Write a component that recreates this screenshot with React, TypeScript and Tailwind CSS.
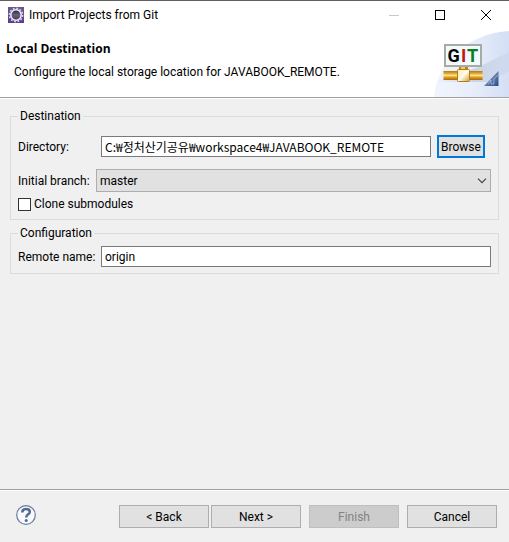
import type { ButtonHTMLAttributes, ReactNode } from "react";

function EclipseIcon() {
  return (
    <svg width="16" height="16" viewBox="0 0 16 16" aria-hidden="true" className="shrink-0">
      <defs>
        <linearGradient id="ecl" x1="0" y1="0" x2="0" y2="1">
          <stop offset="0" stopColor="#6a5a96" />
          <stop offset="1" stopColor="#5c3a8c" />
        </linearGradient>
        <linearGradient id="moon" x1="0" y1="0" x2="0" y2="1">
          <stop offset="0" stopColor="#27203c" />
          <stop offset="0.5" stopColor="#66627c" />
          <stop offset="1" stopColor="#3c3656" />
        </linearGradient>
      </defs>
      <rect width="16" height="16" fill="url(#ecl)" />
      <circle cx="8" cy="8" r="6.6" fill="none" stroke="#d5d0e0" strokeWidth="1.6" strokeDasharray="1.9 1.556" />
      <circle cx="8" cy="8" r="5.2" fill="url(#moon)" stroke="#efedf5" strokeWidth="1.5" />
    </svg>
  );
}

function GitBanner() {
  return (
    <svg width="75" height="68" viewBox="0 0 75 68" role="img" aria-label="GIT" className="shrink-0">
      <defs>
        <linearGradient id="sky" x1="0" y1="0" x2="1" y2="0">
          <stop offset="0" stopColor="#f1f5fd" />
          <stop offset="0.5" stopColor="#e8eefa" />
          <stop offset="1" stopColor="#d3dff6" />
        </linearGradient>
        <linearGradient id="pipe" x1="0" y1="0" x2="0" y2="1">
          <stop offset="0" stopColor="#b5790f" />
          <stop offset="0.25" stopColor="#dda52c" />
          <stop offset="0.5" stopColor="#ffe28b" />
          <stop offset="0.7" stopColor="#dc9c21" />
          <stop offset="1" stopColor="#a96904" />
        </linearGradient>
        <linearGradient id="joint" x1="0" y1="0" x2="1" y2="1">
          <stop offset="0" stopColor="#ffe9a6" />
          <stop offset="0.5" stopColor="#fffbe8" />
          <stop offset="1" stopColor="#d59a2a" />
        </linearGradient>
        <linearGradient id="shade" x1="0" y1="0" x2="1" y2="0">
          <stop offset="0" stopColor="#c3cad6" stopOpacity="0.1" />
          <stop offset="0.5" stopColor="#b9c2d2" stopOpacity="0.6" />
          <stop offset="1" stopColor="#c5d1e7" stopOpacity="0.4" />
        </linearGradient>
        <linearGradient id="corner" x1="0" y1="0" x2="1" y2="1">
          <stop offset="0" stopColor="#9bb2d5" />
          <stop offset="1" stopColor="#284c87" />
        </linearGradient>
      </defs>
      <path d="M0 68C2 34 34 4 75 2V68Z" fill="url(#sky)" />
      <path d="M45 38L75 23V42L56 53H4L10 49Z" fill="url(#shade)" />
      <path d="M64.5 42V57H50Z" fill="url(#corner)" />
      <path d="M54 55L57 51V55H60V50L64 46" fill="none" stroke="#d7e2f5" strokeWidth="0.9" opacity="0.6" />
      <rect x="11" y="16" width="36" height="21" fill="#f1fafc" stroke="#a8aaa4" strokeWidth="2" />
      <g fontFamily="Roboto, sans-serif" fontSize="18" fontWeight="700">
        <text x="13.5" y="33" fill="#080808">G</text>
        <text x="27" y="33" fill="#c7141b">I</text>
        <text x="33" y="33" fill="#087d1b">T</text>
      </g>
      <rect x="25" y="38" width="9" height="4" fill="#b88424" />
      <rect x="27" y="38" width="4" height="4" fill="#f1cb70" />
      <rect x="9.5" y="42" width="39" height="9" fill="url(#pipe)" />
      <rect x="23.5" y="40.5" width="12" height="12" rx="1" fill="url(#joint)" stroke="#b57a19" />
    </svg>
  );
}

function CaptionButton({ label, children }: { label: string; children: ReactNode }) {
  return (
    <button type="button" aria-label={label} className="flex h-7 w-[46px] items-center justify-center">
      <svg width="10" height="10" viewBox="0 0 10 10" fill="none" shapeRendering="crispEdges" aria-hidden="true">
        {children}
      </svg>
    </button>
  );
}

function WizardButton(props: ButtonHTMLAttributes<HTMLButtonElement>) {
  return (
    <button
      type="button"
      className="h-[23px] w-[90px] border border-[#adadad] bg-[#e1e1e1] leading-4 disabled:border-[#bfbfbf] disabled:bg-[#cccccc] disabled:text-[#838383]"
      {...props}
    />
  );
}

export default function App() {
  return (
    <div className="flex min-h-screen flex-col border-t border-[#606060] bg-[#f0f0f0] font-['Roboto','Noto_Sans_CJK_KR',sans-serif] text-[12px] leading-4 text-black">
      <header className="border-b border-[#a0a0a0] bg-white">
        <div className="flex h-7 items-center pl-2">
          <EclipseIcon />
          <span className="ml-[5px] flex-1">Import Projects from Git</span>
          <CaptionButton label="Minimize">
            <path d="M0 5.5H10" stroke="#c8c8c8" />
          </CaptionButton>
          <CaptionButton label="Maximize">
            <rect x="0.5" y="0.5" width="9" height="9" stroke="#000" />
          </CaptionButton>
          <CaptionButton label="Close">
            <path d="M0 0L10 10M10 0L0 10" stroke="#000" shapeRendering="auto" />
          </CaptionButton>
        </div>
        <div className="flex justify-between">
          <div className="pl-1.5 pt-3">
            <h1 className="font-['Open_Sans',sans-serif] font-bold">Local Destination</h1>
            <p className="mt-[7px] pl-2">Configure the local storage location for JAVABOOK_REMOTE.</p>
          </div>
          <GitBanner />
        </div>
      </header>

      <main className="flex-1 border-t border-white px-2.5 pt-[9px]">
        <fieldset className="border border-[#dcdcdc] px-[7px] pb-[7px]">
          <legend className="px-0.5">Destination</legend>
          <div className="mt-[11px] flex items-center">
            <label htmlFor="directory" className="w-[83px]">Directory:</label>
            <input
              id="directory"
              defaultValue="C:₩정처산기공유₩workspace4₩JAVABOOK_REMOTE"
              className="h-[21px] min-w-0 flex-1 border border-[#7a7a7a] bg-white px-[3px] font-['Noto_Sans_CJK_KR',sans-serif]"
            />
            <button type="button" className="ml-1.5 mr-[6px] h-[23px] w-12 border-2 border-[#0078d7] bg-[#e1e1e1] leading-4">
              Browse
            </button>
          </div>
          <div className="mt-[11px] flex items-center">
            <label htmlFor="branch" className="w-[78px] whitespace-nowrap">Initial branch:</label>
            <div className="relative min-w-0 flex-1">
              <select id="branch" className="block h-[23px] w-full appearance-none border border-[#adadad] bg-[#e1e1e1] px-[3px]">
                <option>master</option>
              </select>
              <svg width="10" height="6" viewBox="0 0 10 6" fill="none" aria-hidden="true" className="pointer-events-none absolute right-1 top-[9px]">
                <path d="M1 0.7L5 4.7L9 0.7" stroke="#444" strokeWidth="1.2" />
              </svg>
            </div>
          </div>
          <label className="mt-1 flex items-center gap-[3px]">
            <input type="checkbox" className="size-[13px] appearance-none border border-[#333] bg-white checked:bg-[#0078d7]" />
            Clone submodules
          </label>
        </fieldset>

        <fieldset className="mt-[5px] border border-[#dcdcdc] px-[7px] pb-1.5">
          <legend className="px-0.5">Configuration</legend>
          <div className="mt-[5px] flex items-center">
            <label htmlFor="remote" className="w-[83px] whitespace-nowrap">Remote name:</label>
            <input id="remote" defaultValue="origin" className="h-[21px] min-w-0 flex-1 border border-[#7a7a7a] bg-white px-[3px]" />
          </div>
        </fieldset>
      </main>

      <footer className="border-t border-[#a0a0a0]">
        <div className="flex items-start border-t border-white pb-[14px] pl-4 pr-3 pt-[14px]">
          <button type="button" aria-label="Help" className="mr-auto">
            <svg width="20" height="20" viewBox="0 0 20 20" fill="none" aria-hidden="true" className="block">
              <circle cx="10" cy="10" r="9.3" fill="#f7f9fc" stroke="#657b9c" strokeWidth="1.2" />
              <path d="M6.3 7.4C6.3 4.9 7.8 4 10.1 4C12.5 4 13.8 5.1 13.8 6.9C13.8 9.5 10.3 9.2 10.2 12.5" stroke="#536b91" strokeWidth="2.5" />
              <circle cx="10.2" cy="15.5" r="1.5" fill="#536b91" />
            </svg>
          </button>
          <div className="flex gap-2">
            <div className="flex gap-0.5">
              <WizardButton>&lt; Back</WizardButton>
              <WizardButton>Next &gt;</WizardButton>
            </div>
            <WizardButton disabled>Finish</WizardButton>
            <WizardButton>Cancel</WizardButton>
          </div>
        </div>
      </footer>
    </div>
  );
}
